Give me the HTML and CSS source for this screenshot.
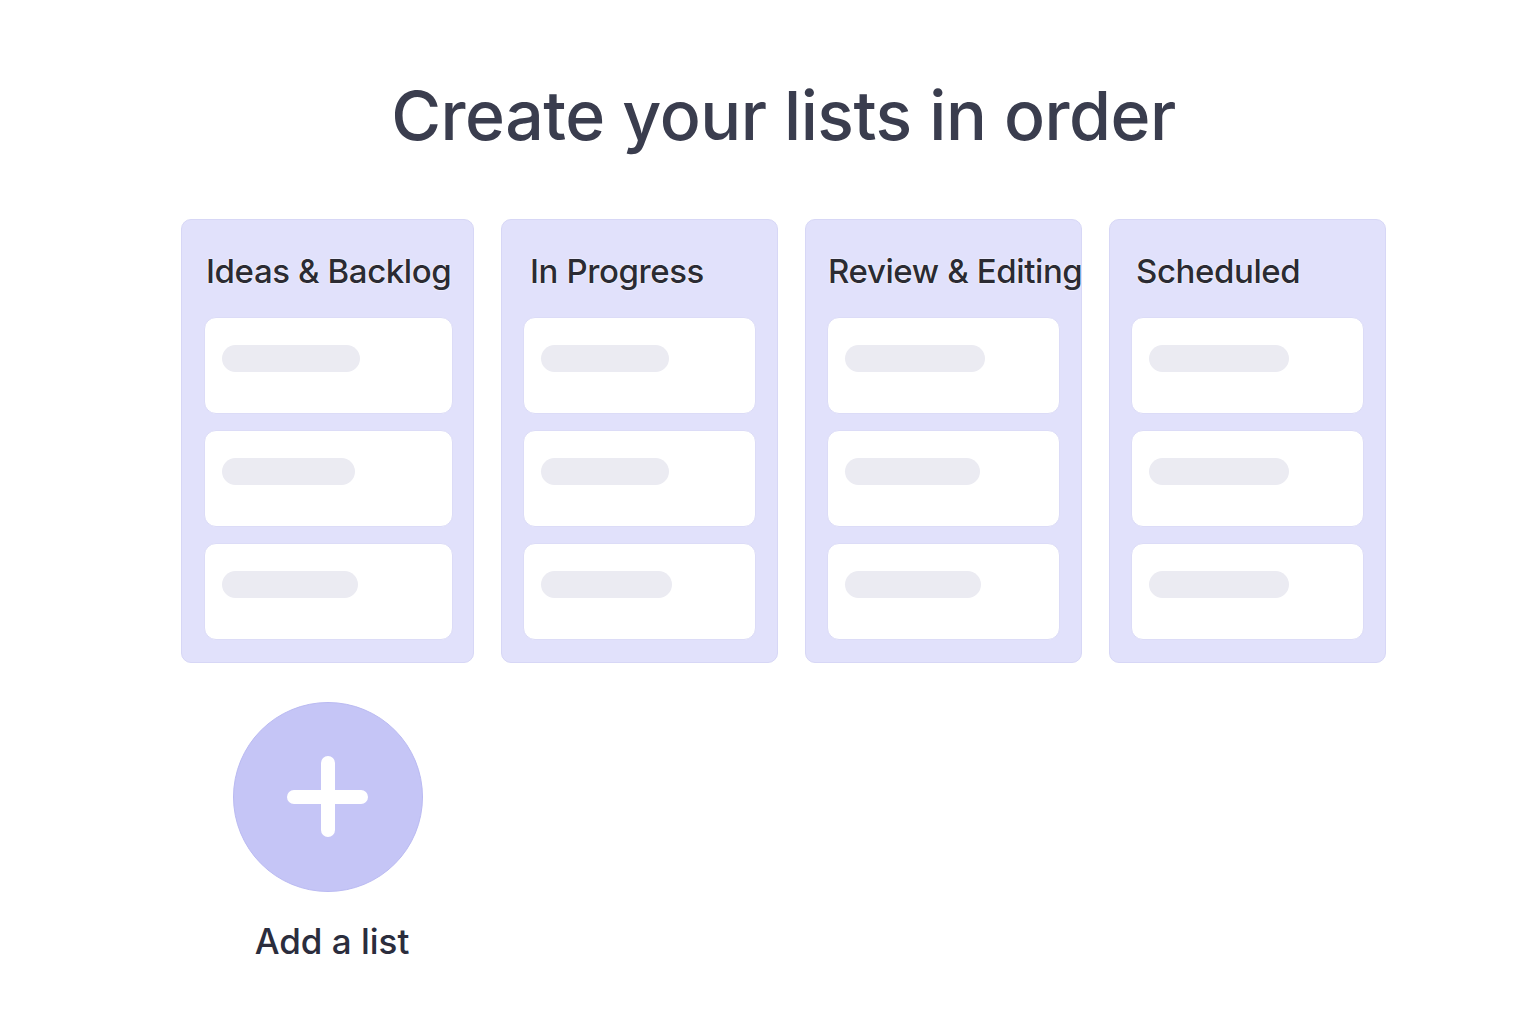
FILE: index.html
```html
<!DOCTYPE html>
<html lang="en">
<head>
<meta charset="utf-8">
<title>Create your lists in order</title>
<link rel="stylesheet" href="styles.css">
</head>
<body>
<main class="page">
  <h1 class="title">Create your lists in order</h1>
  <section class="board">
    <div class="list list-wide">
      <h2 class="list-title">Ideas &amp; Backlog</h2>
      <div class="card"><span class="bar" style="width:138px"></span></div>
      <div class="card"><span class="bar" style="width:133px"></span></div>
      <div class="card"><span class="bar" style="width:136px"></span></div>
    </div>
    <div class="list">
      <h2 class="list-title t2">In Progress</h2>
      <div class="card"><span class="bar" style="width:128px"></span></div>
      <div class="card"><span class="bar" style="width:128px"></span></div>
      <div class="card"><span class="bar" style="width:131px"></span></div>
    </div>
    <div class="list">
      <h2 class="list-title t3">Review &amp; Editing</h2>
      <div class="card"><span class="bar" style="width:140px"></span></div>
      <div class="card"><span class="bar" style="width:135px"></span></div>
      <div class="card"><span class="bar" style="width:136px"></span></div>
    </div>
    <div class="list">
      <h2 class="list-title t4">Scheduled</h2>
      <div class="card"><span class="bar" style="width:140px"></span></div>
      <div class="card"><span class="bar" style="width:140px"></span></div>
      <div class="card"><span class="bar" style="width:140px"></span></div>
    </div>
  </section>
  <div class="add">
    <button class="add-btn" aria-label="Add a list">
      <svg width="82" height="82" viewBox="0 0 82 82"><path d="M41 7V74M7 41H74" stroke="#fff" stroke-width="14" stroke-linecap="round" fill="none"/></svg>
    </button>
    <div class="add-label">Add a list</div>
  </div>
</main>
</body>
</html>
```

FILE: styles.css
```css
* { box-sizing: border-box; }
html, body { margin: 0; padding: 0; background: #ffffff; }
body { font-family: Inter, "Noto Sans", sans-serif; color: #3a3d4e; }

.page {
  width: 1205px;
  margin-left: 181px;
  padding-top: 67px;
}

.title {
  margin: 0;
  text-align: center;
  font-size: 68px;
  font-weight: 500;
  line-height: 96px;
  letter-spacing: -0.5px;
  color: #3a3d4e;
}

.board {
  display: flex;
  gap: 27px;
  margin-top: 56px;
  align-items: flex-start;
}

.list {
  width: 277px;
  background: #e1e1fb;
  border: 1px solid #d7d7f6;
  border-radius: 10px;
  padding: 0 21px 22px 21px;
  display: flex;
  flex-direction: column;
  gap: 16px;
}
.list-wide { width: 293px; padding: 0 20px 22px 22px; }

.list-title {
  margin: 0;
  height: 81px;
  padding-top: 31px;
  padding-left: 2px;
  font-size: 33px;
  font-weight: 500;
  line-height: 40px;
  letter-spacing: -0.4px;
  color: #2b2b33;
  white-space: nowrap;
  text-shadow: 0 0 2px #fff, 0 0 1px #fff;
}
.t2 { padding-left: 7px; }
.t3 { padding-left: 1px; }
.t4 { padding-left: 5px; }

.card {
  height: 97px;
  background: #ffffff;
  border: 1px solid #dcdcf7;
  border-radius: 12px;
  padding: 27px 0 0 17px;
}

.bar {
  display: block;
  height: 27px;
  border-radius: 14px;
  background: #ebebf2;
}

.add {
  width: 293px;
  display: flex;
  flex-direction: column;
  align-items: center;
  margin-top: 39px;
}

.add-btn {
  width: 190px;
  height: 190px;
  border-radius: 50%;
  background: #c5c5f6;
  border: 1px solid #babaf2;
  display: flex;
  align-items: center;
  justify-content: center;
  padding: 0;
  cursor: pointer;
}

.add-label {
  margin-top: 27px;
  padding-left: 9px;
  font-size: 35px;
  font-weight: 500;
  line-height: 44px;
  color: #2b2d3d;
}
```
